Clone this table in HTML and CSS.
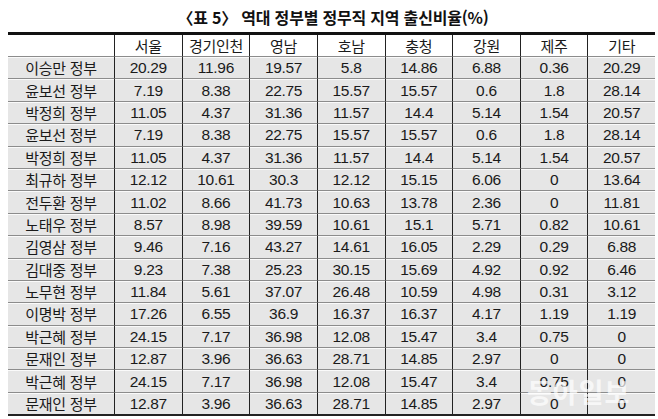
FILE: index.html
```html
<!DOCTYPE html>
<html lang="ko">
<head>
<meta charset="utf-8">
<link rel="stylesheet" href="styles.css">
</head>
<body>
<div class="page">
  <h1 class="title">〈표 5〉 역대 정부별 정무직 지역 출신비율(%)</h1>
  <table class="grid">
    <colgroup><col class="c-name"><col><col><col><col><col><col><col><col></colgroup>
    <thead>
      <tr><th></th><th>서울</th><th>경기인천</th><th>영남</th><th>호남</th><th>충청</th><th>강원</th><th>제주</th><th>기타</th></tr>
    </thead>
    <tbody>
      <tr><td>이승만 정부</td><td>20.29</td><td>11.96</td><td>19.57</td><td>5.8</td><td>14.86</td><td>6.88</td><td>0.36</td><td>20.29</td></tr>
      <tr><td>윤보선 정부</td><td>7.19</td><td>8.38</td><td>22.75</td><td>15.57</td><td>15.57</td><td>0.6</td><td>1.8</td><td>28.14</td></tr>
      <tr><td>박정희 정부</td><td>11.05</td><td>4.37</td><td>31.36</td><td>11.57</td><td>14.4</td><td>5.14</td><td>1.54</td><td>20.57</td></tr>
      <tr><td>윤보선 정부</td><td>7.19</td><td>8.38</td><td>22.75</td><td>15.57</td><td>15.57</td><td>0.6</td><td>1.8</td><td>28.14</td></tr>
      <tr><td>박정희 정부</td><td>11.05</td><td>4.37</td><td>31.36</td><td>11.57</td><td>14.4</td><td>5.14</td><td>1.54</td><td>20.57</td></tr>
      <tr><td>최규하 정부</td><td>12.12</td><td>10.61</td><td>30.3</td><td>12.12</td><td>15.15</td><td>6.06</td><td>0</td><td>13.64</td></tr>
      <tr><td>전두환 정부</td><td>11.02</td><td>8.66</td><td>41.73</td><td>10.63</td><td>13.78</td><td>2.36</td><td>0</td><td>11.81</td></tr>
      <tr><td>노태우 정부</td><td>8.57</td><td>8.98</td><td>39.59</td><td>10.61</td><td>15.1</td><td>5.71</td><td>0.82</td><td>10.61</td></tr>
      <tr><td>김영삼 정부</td><td>9.46</td><td>7.16</td><td>43.27</td><td>14.61</td><td>16.05</td><td>2.29</td><td>0.29</td><td>6.88</td></tr>
      <tr><td>김대중 정부</td><td>9.23</td><td>7.38</td><td>25.23</td><td>30.15</td><td>15.69</td><td>4.92</td><td>0.92</td><td>6.46</td></tr>
      <tr><td>노무현 정부</td><td>11.84</td><td>5.61</td><td>37.07</td><td>26.48</td><td>10.59</td><td>4.98</td><td>0.31</td><td>3.12</td></tr>
      <tr><td>이명박 정부</td><td>17.26</td><td>6.55</td><td>36.9</td><td>16.37</td><td>16.37</td><td>4.17</td><td>1.19</td><td>1.19</td></tr>
      <tr><td>박근혜 정부</td><td>24.15</td><td>7.17</td><td>36.98</td><td>12.08</td><td>15.47</td><td>3.4</td><td>0.75</td><td>0</td></tr>
      <tr><td>문재인 정부</td><td>12.87</td><td>3.96</td><td>36.63</td><td>28.71</td><td>14.85</td><td>2.97</td><td>0</td><td>0</td></tr>
      <tr><td>박근혜 정부</td><td>24.15</td><td>7.17</td><td>36.98</td><td>12.08</td><td>15.47</td><td>3.4</td><td>0.75</td><td>0</td></tr>
      <tr><td>문재인 정부</td><td>12.87</td><td>3.96</td><td>36.63</td><td>28.71</td><td>14.85</td><td>2.97</td><td>0</td><td>0</td></tr>
    </tbody>
  </table>
  <div class="watermark">동아일보</div>
</div>
</body>
</html>
```

FILE: styles.css
```css
html, body {
  margin: 0;
  padding: 0;
  background: #ffffff;
}
body {
  font-family: "Liberation Sans", "Noto Sans CJK KR", sans-serif;
  color: #1a1a1a;
}
.page {
  position: relative;
  width: 658px;
  height: 419px;
  overflow: hidden;
  padding: 0 0 0 8px;
  box-sizing: border-box;
}
.title {
  margin: 0;
  height: 32px;
  line-height: 34px;
  font-size: 16px;
  font-weight: bold;
  text-align: center;
  color: #111;
  font-family: "Noto Sans CJK KR", sans-serif;
  letter-spacing: -0.2px;
}
.grid {
  width: 647px;
  table-layout: fixed;
  border-collapse: separate;
  border-spacing: 0;
  border-top: 3px solid #111;
  border-bottom: 2px solid #222;
}
.c-name { width: 106px; }
.grid th, .grid td {
  padding: 0;
  text-align: center;
  font-size: 15.5px;
  font-weight: normal;
  white-space: nowrap;
  border-left: 1px solid #222;
  border-bottom: 1px solid #8c8c8c;
  box-shadow: inset 0 1px 0 #fafafa;
  letter-spacing: -0.3px;
}
.grid th:first-child, .grid td:first-child {
  border-left: none;
}
.grid th {
  height: 21px;
  background: #ffffff;
  font-family: "Noto Sans CJK KR", sans-serif;
  font-size: 15px;
  box-shadow: none;
  line-height: 21px;
}
.grid td {
  height: 21.4px;
  line-height: 21px;
  background: #e6e6e6;
}
.grid td:first-child {
  font-family: "Noto Sans CJK KR", sans-serif;
  font-size: 15px;
}
.grid tbody tr:last-child td {
  border-bottom: none;
}
.watermark {
  position: absolute;
  left: 527px;
  top: 372px;
  font-family: "Noto Sans CJK KR", sans-serif;
  font-weight: bold;
  font-size: 27px;
  letter-spacing: 1px;
  color: rgba(255, 255, 255, 0.7);
}
```
